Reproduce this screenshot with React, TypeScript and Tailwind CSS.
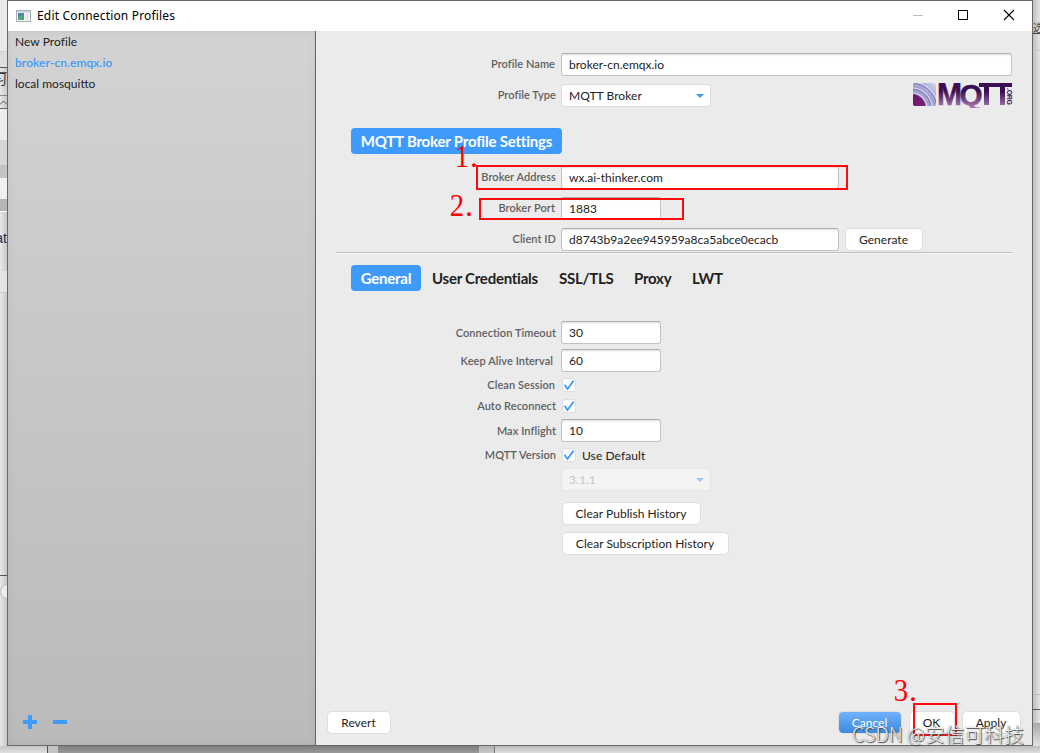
import type { ReactNode } from 'react'
import { clsx } from 'clsx'

// ── Form primitives ──

function Row({ label, className, labelClass = 'pb-px', children }: {
  label?: string
  className?: string
  labelClass?: string
  children: ReactNode
}) {
  return (
    <div className={clsx('flex items-center', className)}>
      <div className={clsx('mr-[5px] w-[240px] shrink-0 text-right text-[11px] font-semibold leading-4 tracking-[0.06px] text-[#606060] whitespace-nowrap', labelClass)}>
        {label}
      </div>
      {children}
    </div>
  )
}

function TextBox({ value, className }: { value: string; className?: string }) {
  return (
    <div className={clsx('h-[23px] shrink-0 rounded-[3px] border border-[#c3c3c3] border-t-[#acacac] bg-white pl-[7px] leading-[22px] shadow-[inset_0_2px_2px_-1px_#dedede]', className)}>
      {value}
    </div>
  )
}

function Select({ value, disabled }: { value: string; disabled?: boolean }) {
  return (
    <div className={clsx('flex h-[23px] w-[150px] items-center justify-between rounded border border-[#dcdcdc] bg-white pl-[7px] pr-1.5', disabled && 'opacity-45')}>
      <span className={clsx('tracking-[0.05px]', disabled && 'text-[#999]')}>{value}</span>
      <svg width="8" height="4" viewBox="0 0 8 4">
        <path d="M0 0H8L4 4Z" fill="#3f9bfb" />
      </svg>
    </div>
  )
}

function Check() {
  return (
    <span className="ml-px flex size-3.5 items-center justify-center rounded-[3px] border border-[#dcdcdc] bg-white">
      <svg width="12" height="12" viewBox="0 0 12 12" fill="none">
        <path d="M1.5 5.8 4.5 10 10.6 1.6" stroke="#3f9bfb" strokeWidth="1.8" />
      </svg>
    </span>
  )
}

function Button({ children, className }: { children: ReactNode; className?: string }) {
  return (
    <button className={clsx('h-[23px] shrink-0 rounded-[5px] border border-[#dedede] bg-white pr-px text-center leading-[21px] tracking-[0.03px] whitespace-nowrap', className)}>
      {children}
    </button>
  )
}

function MqttLogo() {
  return (
    <svg width="100" height="25" viewBox="0 0 100 25">
      <defs>
        <linearGradient id="mqtt-word" gradientUnits="userSpaceOnUse" x1="0" y1="0" x2="0" y2="24">
          <stop offset="0.35" stopColor="#3b0d52" />
          <stop offset="1" stopColor="#a578b0" />
        </linearGradient>
        <linearGradient id="mqtt-sky" x1="0" y1="1" x2="1" y2="0">
          <stop offset="0" stopColor="#9290c6" />
          <stop offset="0.65" stopColor="#a9a7d3" />
          <stop offset="1" stopColor="#d8d7eb" />
        </linearGradient>
        <linearGradient id="mqtt-core" x1="0" y1="0" x2="1" y2="1">
          <stop offset="0" stopColor="#5b1362" />
          <stop offset="1" stopColor="#8e2583" />
        </linearGradient>
        <clipPath id="mqtt-tile">
          <rect width="23" height="23" rx="2" />
        </clipPath>
      </defs>
      <g clipPath="url(#mqtt-tile)">
        <rect width="23" height="23" fill="url(#mqtt-sky)" />
        <g fill="none" stroke="#dcdbee" strokeWidth="1.1">
          <circle cx="-1" cy="25" r="15" />
          <circle cx="-1" cy="25" r="20" />
          <circle cx="-1" cy="25" r="26" />
        </g>
        <g fill="none" stroke="#7775b5" strokeWidth="0.9">
          <circle cx="-1" cy="25" r="18.8" />
          <circle cx="-1" cy="25" r="24.6" />
        </g>
        <circle cx="-1" cy="25" r="13.8" fill="url(#mqtt-core)" />
      </g>
      <g fontFamily="'Liberation Sans', sans-serif" fontWeight="bold" fill="url(#mqtt-word)" stroke="url(#mqtt-word)" strokeWidth="0.5">
        <text x="24" y="22" fontSize="31" textLength="25" lengthAdjust="spacingAndGlyphs">M</text>
        <text x="46.5" y="21.5" fontSize="29" textLength="23" lengthAdjust="spacingAndGlyphs">Q</text>
      </g>
      <path d="M66 0H99V4H66ZM71 4H76V22H71ZM87 4H92V22H87Z" fill="url(#mqtt-word)" />
      <text transform="translate(93.5 5) rotate(90)" fontFamily="'Liberation Sans', sans-serif" fontWeight="bold" fontSize="7" fill="#3b0d52" textLength="17">.ORG</text>
    </svg>
  )
}

const TABS = [
  { name: 'User Credentials', width: 'w-[127px]' },
  { name: 'SSL/TLS', width: 'w-[75px]' },
  { name: 'Proxy', width: 'w-[58px]' },
  { name: 'LWT', width: 'w-[40px]' },
]

const STEPS = [
  { digit: '1', place: 'left-[454px] top-[140px]' },
  { digit: '2', place: 'left-[449px] top-[189px]' },
  { digit: '3', place: 'left-[893px] top-[674px]' },
]

// ── Desktop slivers visible around the dialog ──

function LeftEdge() {
  return (
    <div className="h-[746px] w-[7px] overflow-hidden bg-gradient-to-r from-[#e8e8e8] to-[#c8c8c8] text-[#333]">
      <div className="h-[51px] bg-[#eaeaea]" />
      <div className="h-4 border-t border-[#ccc] bg-[#ddd]" />
      <div className="h-[6px] border-t border-b border-[#555]" />
      <div className="flex h-[14px] w-[7px] justify-end text-[14px] leading-[12px]">习</div>
      <div className="mt-1 h-[4px]" />
      <div className="h-[13px] border-t border-[#888]">
        <svg className="mt-1" width="7" height="5" viewBox="0 0 7 5" fill="none">
          <path d="M0 4.5 3.5 1 7 4.5" stroke="#555" />
        </svg>
      </div>
      <div className="h-[32px] border-t border-[#666] bg-[#ededed]" />
      <div className="h-[25px] bg-[#d6d6d6]" />
      <div className="h-[13px] bg-[#c4c2c4]" />
      <div className="h-[21px] bg-[#f0f0f0]" />
      <div className="h-3 bg-[#b5b5b5]" />
      <div className="flex h-[60px] justify-end border-t border-white pt-[19px] font-['Liberation_Sans'] text-[14px] leading-[14px] text-[#29294f]">at</div>
      <div className="h-[22px] border-b border-[#ccc] bg-[#e4e4e4]" />
      <div className="h-[283px] border-b border-[#555]" />
      <div className="mt-2 h-[15px] w-3 rounded-l-full border border-[#bbb] bg-[#eee]" />
    </div>
  )
}

function RightEdge() {
  return (
    <div className="h-[746px] w-[7px] overflow-hidden bg-gradient-to-r from-[#c0c0c0] to-[#e4e4e4]">
      <div className="h-[51px] border-b border-[#c5c5c5] pt-[21px] font-['Noto_Sans_CJK_SC'] text-[11px] leading-[13px] text-[#444] underline">选</div>
      <div className="h-[643px]" />
      <div className="h-[15px] border-t border-[#bbb]" />
      <div className="h-[14px] border-t border-[#555]" />
      <div className="h-6 bg-gradient-to-b from-[#aaa] to-[#e4e4e4]" />
    </div>
  )
}

export default function App() {
  return (
    <div className="relative flex h-[753px] w-[1040px] flex-col overflow-hidden bg-[#dedede] font-['Lato','Noto_Sans_CJK_SC',sans-serif] text-[12px] text-[#222]">
      <div className="flex h-[746px]">
        <LeftEdge />

        {/* Dialog window */}
        <div className="flex w-[1026px] flex-col border border-[#686868] bg-[#ebebeb]">
          {/* Title bar */}
          <header className="flex h-[30px] shrink-0 items-center bg-white pl-2 text-black">
            <svg width="15" height="12" viewBox="0 0 15 12">
              <rect x="0.5" y="0.5" width="14" height="11" fill="#f7f7f7" stroke="#a7afb8" />
              <rect x="1" y="1" width="13" height="1.5" fill="#c9d2dc" />
              <rect x="2" y="3" width="6" height="7" fill="#4d8c9c" />
              <rect x="2" y="6" width="5" height="4" fill="#55a37e" />
              <rect x="9" y="3" width="4" height="7" fill="#e5e8ea" />
            </svg>
            <h1 className="ml-1.5 flex-1 font-['Noto_Sans'] text-[12px] leading-5 tracking-[0.17px]">Edit Connection Profiles</h1>
            <svg width="127" height="30" viewBox="0 0 127 30" fill="none" shapeRendering="crispEdges">
              <path d="M8 14.5H18" stroke="#bdbdbd" />
              <rect x="53.5" y="9.5" width="9" height="9" stroke="#000" />
              <path d="M99 9 109 19M109 9 99 19" stroke="#000" strokeWidth="1.1" shapeRendering="auto" />
            </svg>
          </header>

          <div className="flex min-h-0 flex-1">
            {/* Profile list */}
            <aside className="flex w-[308px] shrink-0 flex-col justify-between border-r border-[#646464] bg-gradient-to-b from-[#d3d3d3] to-[#bababa] shadow-[inset_0_0_8px_rgba(0,0,0,0.06)]">
              <ul className="pl-[7px] text-[12px] leading-[21px]">
                <li className="tracking-[0.05px]">New Profile</li>
                <li className="font-semibold tracking-[0.08px] text-[#3f9bfb]">broker-cn.emqx.io</li>
                <li>local mosquitto</li>
              </ul>
              <div className="flex gap-4 pb-4 pl-[15px]">
                <svg width="14" height="14" viewBox="0 0 14 14">
                  <path d="M5 0H9V5H14V9H9V14H5V9H0V5H5Z" fill="#3f9bfb" />
                </svg>
                <svg width="14" height="14" viewBox="0 0 14 14">
                  <path d="M0 5H14V9H0Z" fill="#3f9bfb" />
                </svg>
              </div>
            </aside>

            {/* Profile editor */}
            <main className="flex min-w-0 flex-1 flex-col">
              <Row label="Profile Name" labelClass="pb-px pr-px" className="mt-[22px]">
                <TextBox value="broker-cn.emqx.io" className="w-[451px]" />
              </Row>
              <Row label="Profile Type" className="mt-2 h-[23px]">
                <Select value="MQTT Broker" />
                <div className="ml-[202px] h-[25px]"><MqttLogo /></div>
              </Row>

              <h2 className="mt-[21px] ml-[35px] h-[26px] w-[211px] rounded bg-[#3f9bfb] text-center text-[15px] font-bold leading-[27px] tracking-[-0.2px] text-white">
                MQTT Broker Profile Settings
              </h2>

              <Row label="Broker Address" className="mt-3">
                <TextBox value="wx.ai-thinker.com" className="w-[278px] tracking-[0.04px]" />
              </Row>
              <Row label="Broker Port" labelClass="pb-px pr-px" className="mt-2">
                <TextBox value="1883" className="w-[100px]" />
              </Row>
              <Row label="Client ID" className="mt-2">
                <TextBox value="d8743b9a2ee945959a8ca5abce0ecacb" className="w-[278px]" />
                <Button className="ml-1.5 w-[78px]">Generate</Button>
              </Row>

              <div className="mt-px ml-5 h-[2px] w-[676px] shrink-0 border-t border-[#bebebe] bg-[#f8f8f8]" />

              <nav className="mt-[11px] ml-[35px] flex h-[26px] text-[15px] font-bold leading-[27px] tracking-[-0.25px] whitespace-nowrap">
                <div className="mr-[11px] w-[70px] rounded bg-[#3f9bfb] text-center text-white">General</div>
                {TABS.map((tab) => (
                  <div key={tab.name} className={tab.width}>{tab.name}</div>
                ))}
              </nav>

              <Row label="Connection Timeout" labelClass="pt-px" className="mt-[30px]">
                <TextBox value="30" className="w-[100px]" />
              </Row>
              <Row label="Keep Alive Interval" labelClass="pt-px pr-[3px]" className="mt-[5px]">
                <TextBox value="60" className="w-[100px]" />
              </Row>
              <Row label="Clean Session" labelClass="pb-px pr-px" className="mt-1.5 h-3.5"><Check /></Row>
              <Row label="Auto Reconnect" className="mt-[7px] h-3.5"><Check /></Row>
              <Row label="Max Inflight" labelClass="pt-px" className="mt-1.5">
                <TextBox value="10" className="w-[100px]" />
              </Row>
              <Row label="MQTT Version" className="mt-1.5 h-3.5">
                <Check />
                <span className="ml-1.5 pt-px tracking-[0.08px]">Use Default</span>
              </Row>
              <Row className="mt-1.5"><Select value="3.1.1" disabled /></Row>
              <Row className="mt-[11px]"><Button className="ml-px w-[139px]">Clear Publish History</Button></Row>
              <Row className="mt-[7px]"><Button className="ml-px w-[167px]">Clear Subscription History</Button></Row>

              <footer className="mt-auto mb-[11px] flex pl-[11px]">
                <Button className="w-[64px]">Revert</Button>
                <Button className="ml-[447px] w-[64px] border-[#4793dd] bg-gradient-to-b from-[#6fb2fb] to-[#3a8ae0] text-white">Cancel</Button>
                <Button className="ml-[7px] w-[46px]">OK</Button>
                <Button className="ml-[7px] w-[59px]">Apply</Button>
              </footer>
            </main>
          </div>
        </div>

        <RightEdge />
      </div>

      {/* Desktop below the dialog */}
      <div className="flex h-[7px]">
        <div className="w-[47px] bg-gradient-to-b from-[#c4c4c4] to-[#e0e0e0]" />
        <div className="w-[11px] border-l border-[#555] bg-[#c4c4c4]" />
        <div className="w-[421px] bg-gradient-to-b from-[#7e7e7e] to-[#999]" />
        <div className="w-[15px] bg-gradient-to-b from-[#b0b0b0] to-[#c8c8c8]" />
        <div className="flex-1 border-l border-[#777] bg-gradient-to-b from-[#bcbcbc] to-[#dedede]" />
      </div>

      {/* Red step markers */}
      <div className="absolute left-[476px] top-[165px] h-[25px] w-[372px] border-2 border-[#ff0a0a]" />
      <div className="absolute left-[479px] top-[198px] h-[22px] w-[205px] border-2 border-[#ff0a0a]" />
      <div className="absolute left-[913px] top-[703px] h-[33px] w-[44px] border-2 border-[#ff0a0a]" />
      {STEPS.map(({ digit, place }) => (
        <div key={digit} className={clsx("absolute flex font-['Liberation_Serif',serif] text-[32px] leading-8 text-[#ff0000]", place)}>
          <span className="w-4 scale-x-90">{digit}</span>
          <span>.</span>
        </div>
      ))}

      {/* Watermark */}
      <div className="absolute left-[852px] top-[722px] whitespace-nowrap font-['Noto_Sans_CJK_SC',sans-serif] text-[19.8px] font-light leading-6 text-[#ececec] [text-shadow:1px_1px_1px_#444,0_0_1px_#666]">
        CSDN @安信可科技
      </div>
    </div>
  )
}
